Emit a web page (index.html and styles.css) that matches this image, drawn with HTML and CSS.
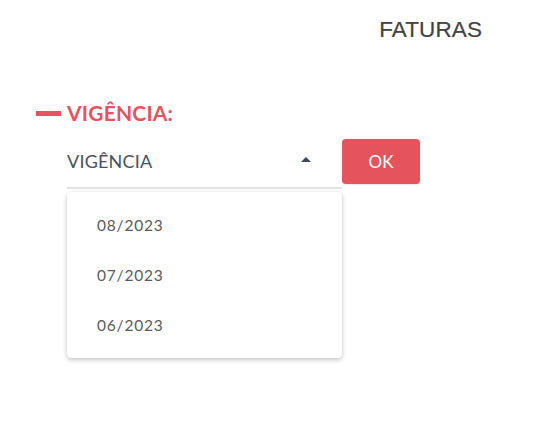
FILE: index.html
```html
<!DOCTYPE html>
<html lang="pt">
<head>
<meta charset="utf-8">
<link rel="stylesheet" href="styles.css">
</head>
<body>
<div class="page">
  <header class="header">
    <h1 class="title">FATURAS</h1>
  </header>
  <section class="section">
    <div class="label-row">
      <span class="dash"></span>
      <span class="label">VIGÊNCIA:</span>
    </div>
    <div class="form-row">
      <div class="select">
        <div class="select-field">
          <span class="select-text">VIGÊNCIA</span>
          <svg class="arrow" width="10" height="5" viewBox="0 0 10 5"><path d="M0 5 L5 0 L10 5 Z" fill="#3b4658"/></svg>
        </div>
        <ul class="menu">
          <li class="menu-item">08/2023</li>
          <li class="menu-item">07/2023</li>
          <li class="menu-item">06/2023</li>
        </ul>
      </div>
      <button class="ok">OK</button>
    </div>
  </section>
</div>
</body>
</html>
```
FILE: styles.css
```css
* { box-sizing: border-box; }
html, body { margin: 0; padding: 0; background: #fff; }
body { font-family: "Lato", "Liberation Sans", sans-serif; width: 537px; height: 425px; overflow: hidden; }
.page { display: flex; flex-direction: column; }
.header { display: flex; justify-content: flex-end; padding: 16px 55px 0 0; }
.title { margin: 0; font-family: "Liberation Sans", Arial, sans-serif; font-weight: 400; font-size: 22.5px; line-height: 28px; color: #434343; letter-spacing: 0.1px; -webkit-text-stroke: 0.2px #434343; }
.section { padding: 58px 0 0 36px; }
.label-row { display: flex; align-items: center; gap: 6px; height: 22px; }
.dash { width: 25px; height: 5px; background: #e5535c; margin-top: 1px; }
.label { font-weight: 700; font-size: 21px; color: #e5535c; line-height: 22px; letter-spacing: 0.2px; }
.form-row { display: flex; align-items: flex-start; margin-top: 16px; padding-left: 31px; }
.select { position: relative; width: 275px; }
.select-field { display: flex; align-items: center; justify-content: space-between; height: 49px; border-bottom: 2px solid #e2e2e2; padding: 0 31px 6px 0; }
.select-text { font-size: 18px; color: #4a5262; letter-spacing: 0.2px; }
.arrow { display: block; margin-top: -3px; }
.menu { position: absolute; left: 0; top: 52px; width: 275px; margin: 0; padding: 8px 0; list-style: none; background: #fff; border-radius: 4px; box-shadow: 0 2px 5px rgba(0,0,0,0.22), 0 0 2px rgba(0,0,0,0.08); }
.menu-item { height: 50px; display: flex; align-items: center; padding-left: 30px; font-size: 15.5px; color: #5a5a5a; letter-spacing: 0.8px; }
.ok { margin-top: -1px; width: 78px; height: 45px; border: none; border-radius: 4px; background: #e5535c; color: #fff; font-family: "Lato", sans-serif; font-size: 17px; padding: 0; box-shadow: 0 1px 2px rgba(0,0,0,0.1); }
```
